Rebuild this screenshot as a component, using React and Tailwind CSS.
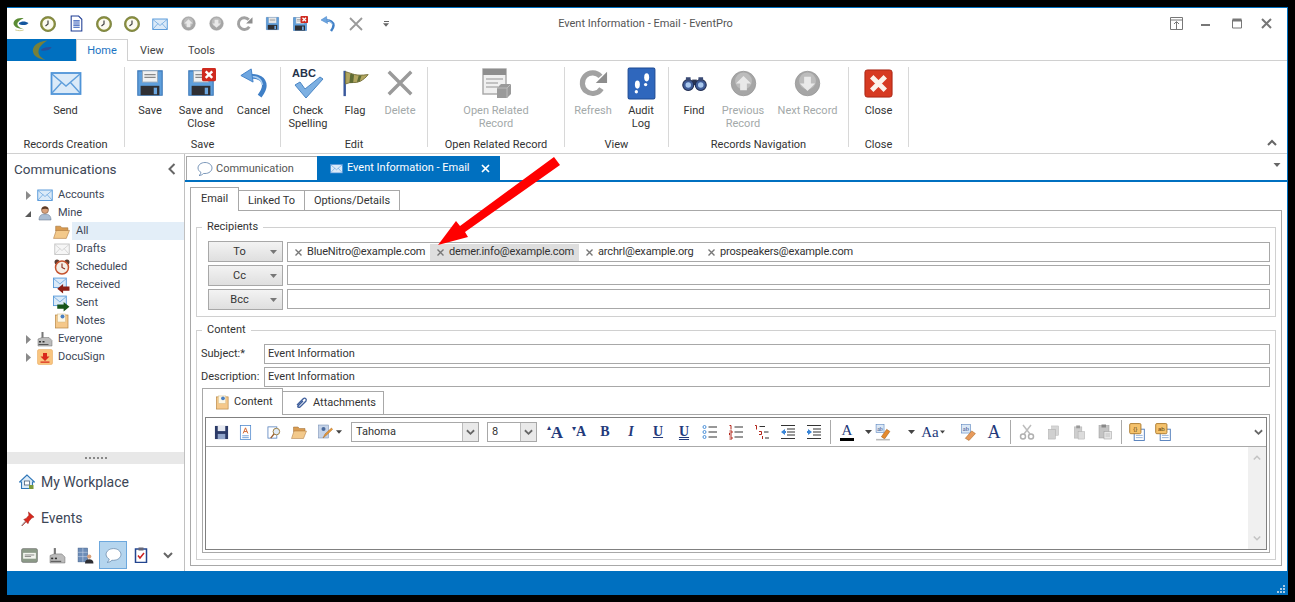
import React from "react";

const Svg = ({ s = 16, children, className = "" }) => (
  <svg width={s} height={s} viewBox="0 0 32 32" className={"shrink-0 " + className}>{children}</svg>
);

const Mail = ({ s, grey }) => (
  <Svg s={s}>
    <rect x="1.5" y="6" width="29" height="21" fill={grey ? "#f6f6f6" : "#dbeaf8"} stroke={grey ? "#c4c4c4" : "#4f94d8"} strokeWidth="1.8" />
    <path d="M2 7l14 12L30 7M2 26l10-11M30 26L20 15" fill="none" stroke={grey ? "#c8c8c8" : "#5f9edb"} strokeWidth="1.4" />
  </Svg>
);
const Clock = ({ s }) => (
  <Svg s={s}>
    <circle cx="16" cy="16" r="13.5" fill="#fbfaf0" stroke="#8b8f3c" strokeWidth="4.5" />
    <circle cx="16" cy="16" r="15" fill="none" stroke="#6f7a52" strokeWidth="1" />
    <path d="M16 9v7l-5 4" fill="none" stroke="#444" strokeWidth="2.4" />
  </Svg>
);
const Doc = ({ s }) => (
  <Svg s={s}>
    <path d="M6 2h14l6 6v22H6z" fill="#fff" stroke="#1f3d94" strokeWidth="2" />
    <path d="M10 11h12M10 15h12M10 19h12M10 23h12" stroke="#2c55b5" strokeWidth="2" />
  </Svg>
);
const Round = ({ s, down }) => (
  <Svg s={s}>
    <circle cx="16" cy="16" r="14.5" fill="#a6a6a6" stroke="#999" />
    <circle cx="16" cy="13" r="10" fill="#bcbcbc" />
    <path d={down ? "M12 8h8v8h5l-9 9-9-9h5z" : "M12 24h8v-8h5l-9-9-9 9h5z"} fill="#e9e9e9" />
  </Svg>
);
const Refresh = ({ s }) => (
  <Svg s={s}>
    <path d="M25 22a11 11 0 1 1-1-13" fill="none" stroke="#a2a2a2" strokeWidth="5.5" />
    <path d="M31 4v12H19z" fill="#8d8d8d" />
  </Svg>
);
const Floppy = ({ s, x }) => (
  <Svg s={s}>
    <path d="M3 3h26v26H3z" fill="#5f9fdc" stroke="#3c78b8" strokeWidth="1.2" />
    <rect x="8" y="3" width="16" height="12" fill="#f1f1f1" stroke="#9ab" />
    <path d="M10 7h12M10 10h12" stroke="#888" strokeWidth="1.2" />
    <rect x="6" y="19" width="20" height="10" fill="#2f2f33" />
    <rect x="20" y="21" width="3.5" height="7" fill="#6ba6df" />
    {x && <>
      <rect x="17" y="0" width="15" height="14" rx="1.5" fill="#cf2a1f" />
      <path d="M21 3.5l7 7M28 3.5l-7 7" stroke="#fff" strokeWidth="2.6" />
    </>}
  </Svg>
);
const Undo = ({ s }) => (
  <Svg s={s}>
    <path d="M12 9c8-1 15 3 15 10 0 4-2 7-5 11" fill="none" stroke="#3f7fc6" strokeWidth="5" />
    <path d="M13 9c6 0 11 3 12 9" fill="none" stroke="#a9cdf0" strokeWidth="1.6" />
    <path d="M2 8l11-7 2 14z" fill="#6ea6e0" stroke="#3f7fc6" />
  </Svg>
);
const GreyX = ({ s }) => (
  <Svg s={s}><path d="M4 4l24 24M28 4L4 28" stroke="#9a9a9a" strokeWidth="3.6" /></Svg>
);
const Spell = ({ s }) => (
  <Svg s={s}>
    <text x="0" y="10" fontSize="11" fontWeight="700" fontFamily="Liberation Sans" fill="#24324a">ABC</text>
    <path d="M3 18l5-3 5 7L28 10l3 2-17 19z" fill="#7db0e2" stroke="#4b86c4" strokeWidth="1" />
  </Svg>
);
const Flag = ({ s }) => (
  <Svg s={s}>
    <path d="M5 3v27" stroke="#39589c" strokeWidth="2.6" />
    <path d="M6 4c8 2 10 5 24 3-3 4-5 5-8 7-6 3-10 0-16 3z" fill="#b2a660" stroke="#75703a" />
    <path d="M11 6l4 1-1 9-4 0zM20 8l3 0-2 6-3 1z" fill="#5e6b35" />
  </Svg>
);
const OpenRel = ({ s }) => (
  <Svg s={s}>
    <rect x="3" y="2" width="23" height="25" fill="#f0f0f0" stroke="#a5a5a5" strokeWidth="1.4" />
    <rect x="3" y="2" width="23" height="6" fill="#8e8e8e" />
    <path d="M6 12h17M6 16h12M6 20h12" stroke="#b3b3b3" strokeWidth="1.6" />
    <path d="M17 21l4-4h10v10l-4 4H17z" fill="#9a9a9a" />
    <path d="M17 21h10v10M27 21l4-4" fill="none" stroke="#bbb" />
  </Svg>
);
const Audit = ({ s }) => (
  <Svg s={s}>
    <rect x="3" y="1" width="26" height="30" rx="1.5" fill="#2f67bd" stroke="#1d4a94" />
    <ellipse cx="12" cy="17" rx="2.4" ry="4" fill="#fff" />
    <circle cx="11" cy="24" r="1.6" fill="#fff" />
    <ellipse cx="21" cy="10" rx="2.4" ry="4" fill="#fff" />
    <circle cx="20" cy="17" r="1.6" fill="#fff" />
  </Svg>
);
const Find = ({ s }) => (
  <Svg s={s}>
    <rect x="13" y="11" width="6" height="7" fill="#2b3452" />
    <circle cx="8" cy="18" r="7" fill="#3f5c98" stroke="#222e50" strokeWidth="1.4" />
    <circle cx="24" cy="18" r="7" fill="#3f5c98" stroke="#222e50" strokeWidth="1.4" />
    <circle cx="8" cy="18" r="3.5" fill="#a9c8ee" />
    <circle cx="24" cy="18" r="3.5" fill="#a9c8ee" />
    <rect x="5" y="8" width="6" height="5" fill="#3a4a74" />
    <rect x="21" y="8" width="6" height="5" fill="#3a4a74" />
  </Svg>
);
const RedClose = ({ s }) => (
  <Svg s={s}>
    <rect x="2" y="2" width="28" height="28" rx="2.5" fill="#d63a22" stroke="#a82413" />
    <path d="M9 9l14 14M23 9L9 23" stroke="#fbf3ec" strokeWidth="5" />
  </Svg>
);
const Logo = ({ s }) => (
  <Svg s={s}>
    <path d="M22 6C8 4 2 12 3 17c1 5 8 9 18 9-7-2-11-5-11-9s5-8 12-11z" fill="#5b8c35" />
    <path d="M13 15c4-4 13-4 18 0-4 5-13 5-18 2z" fill="#14569e" />
    <path d="M6 28c6 2 12 2 16 0" stroke="#c8c27a" strokeWidth="1.5" fill="none" />
  </Svg>
);
const TabLogo = () => (
  <Svg s={22}>
    <path d="M24 2C8 3 1 12 3 19c1 6 9 11 18 11-7-3-11-7-10-13 1-6 6-11 13-15z" fill="#77803a" />
    <path d="M15 15c5-3 11-4 15-3-2 4-9 6-15 5z" fill="#27509c" />
  </Svg>
);
const Person = ({ s }) => (
  <Svg s={s}>
    <path d="M4 30c0-8 4-12 12-12s12 4 12 12z" fill="#a9bcd2" stroke="#5e6f86" />
    <circle cx="16" cy="10" r="7" fill="#d9a27c" stroke="#6a4630" />
    <path d="M9 9c0-8 14-8 14 0-4-2-9-2-14 0z" fill="#5b3a25" />
  </Svg>
);
const Folder = ({ s }) => (
  <Svg s={s}>
    <path d="M5 6h9l3 3h11v6H5z" fill="#d99c52" stroke="#9a6a30" />
    <path d="M1 29l5-15h25l-6 15z" fill="#f3c98b" stroke="#a8743a" />
  </Svg>
);
const Alarm = ({ s }) => (
  <Svg s={s}>
    <circle cx="6" cy="6" r="5" fill="#5a3b30" />
    <circle cx="26" cy="6" r="5" fill="#5a3b30" />
    <circle cx="16" cy="17" r="13" fill="#f5efe6" stroke="#c5532e" strokeWidth="3" />
    <path d="M16 9v8l6 3" fill="none" stroke="#8a2a1a" strokeWidth="2.2" />
  </Svg>
);
const MailArrow = ({ s, out }) => (
  <Svg s={s}>
    <rect x="1" y="2" width="24" height="18" fill="#dbeaf8" stroke="#4f94d8" strokeWidth="1.6" />
    <path d="M1 3l12 10L25 3" fill="none" stroke="#5f9edb" strokeWidth="1.4" />
    {out
      ? <path d="M8 18h12v-5l11 9-11 9v-5H8z" fill="#17561a" />
      : <path d="M31 18H19v-5L8 22l11 9v-5h12z" fill="#8c1f14" />}
  </Svg>
);
const Note = ({ s }) => (
  <Svg s={s}>
    <rect x="3" y="4" width="25" height="26" fill="#f5c88a" stroke="#b58542" strokeWidth="1.4" />
    <rect x="7" y="2" width="16" height="16" fill="#fdf7e6" stroke="#d2b67c" />
    <circle cx="17" cy="7" r="4" fill="#4a7fc2" />
  </Svg>
);
const Factory = ({ s }) => (
  <Svg s={s}>
    <rect x="9" y="2" width="4" height="12" fill="#777" />
    <path d="M2 30V16l8-3h14l6 6v11z" fill="#bcbcbc" stroke="#6d6d6d" />
    <rect x="4" y="20" width="4" height="3" fill="#333" />
    <rect x="11" y="20" width="4" height="3" fill="#333" />
    <rect x="3" y="26" width="20" height="2" fill="#555" />
  </Svg>
);
const Docu = ({ s }) => (
  <Svg s={s}>
    <rect x="1" y="1" width="30" height="30" rx="3" fill="#f9c57f" stroke="#e6a457" />
    <path d="M12 8h8v7h5l-9 9-9-9h5z" fill="#d9291c" />
    <rect x="7" y="25" width="18" height="2.5" fill="#d9291c" />
  </Svg>
);
const House = ({ s }) => (
  <Svg s={s}>
    <path d="M16 2L1 16h4v13h22V16h4z" fill="#dcebf8" stroke="#2f76b8" strokeWidth="2.2" />
    <rect x="11" y="14" width="10" height="8" fill="#fff" stroke="#49607c" strokeWidth="1.6" />
    <rect x="20" y="22" width="9" height="8" fill="#7c9a3a" />
  </Svg>
);
const Pin = ({ s }) => (
  <Svg s={s}>
    <path d="M18 2l12 11-5 2-6 7-2 5-4-4-9 9 8-10-4-4 5-2 6-7z" fill="#d9281e" stroke="#8e1710" />
    <path d="M3 31l8-9" stroke="#999" strokeWidth="2" />
  </Svg>
);
const Card = ({ s }) => (
  <Svg s={s}>
    <rect x="1" y="3" width="30" height="26" rx="3" fill="#8c9a88" stroke="#666" />
    <rect x="4" y="11" width="24" height="11" fill="#f3f5ef" />
    <path d="M7 15h18M7 18h12" stroke="#666" strokeWidth="1.4" />
  </Svg>
);
const BuildingMan = ({ s }) => (
  <Svg s={s}>
    <rect x="2" y="2" width="18" height="26" fill="#6d8db8" stroke="#45628c" />
    <path d="M11 2v26M2 10h18M2 18h18" stroke="#cfdcec" />
    <circle cx="23" cy="18" r="4" fill="#d9a27c" />
    <path d="M15 31c0-6 3-8 8-8s8 2 8 8z" fill="#2d2d33" />
  </Svg>
);
const Bubble = ({ s, line = "#6f8fb0" }) => (
  <Svg s={s}>
    <path d="M16 3C8 3 2 8 2 14c0 4 3 7 6 9-1 3-2 5-4 6 4 0 7-2 9-4h3c8 0 14-5 14-11S24 3 16 3z" fill="#fff" stroke={line} strokeWidth="1.6" />
  </Svg>
);
const Clip = ({ s }) => (
  <Svg s={s}>
    <rect x="5" y="4" width="22" height="27" fill="#fff" stroke="#23458f" strokeWidth="3" />
    <rect x="11" y="1" width="10" height="6" fill="#667" />
    <path d="M10 17l4 5 8-10" fill="none" stroke="#cb2020" strokeWidth="3" />
  </Svg>
);
const Tri = ({ open }) => (
  <svg width="7" height="9" viewBox="0 0 7 9" className="shrink-0">
    {open ? <path d="M6 2v6H0z" fill="#595959" /> : <path d="M1 0l5 4.5L1 9z" fill="#8a8a8a" />}
  </svg>
);
const Chev = ({ up, w = 10, c = "#777" }) => (
  <svg width={w} height="7" viewBox="0 0 10 7" className="shrink-0">
    <path d={up ? "M1 6l4-4 4 4" : "M1 1l4 4 4-4"} fill="none" stroke={c} strokeWidth="2" />
  </svg>
);
const Drop = ({ c = "#444", w = 7 }) => (
  <svg width={w} height="4" viewBox="0 0 7 4" className="shrink-0"><path d="M0 0h7L3.5 4z" fill={c} /></svg>
);

const Qat = ({ w = "w-[28px]", children }) => (
  <div className={"flex items-center justify-center " + w}>{children}</div>
);

const RibbonItem = ({ w, icon, label, off }) => (
  <div className={"flex flex-col items-center " + w}>
    <div className="h-[36px] flex items-center justify-center">{icon}</div>
    <div className={"mt-[3px] text-center leading-[13px] whitespace-nowrap " + (off ? "text-[#a3a9a9]" : "text-[#333]")}>{label}</div>
  </div>
);

const Group = ({ w, caption, children }) => (
  <>
    <div className={"flex flex-col " + w}>
      <div className="flex h-[73px] justify-center">{children}</div>
      <div className="text-center leading-[13px] text-[#333] whitespace-nowrap">{caption}</div>
    </div>
    <div className="w-px h-[80px] mt-[2px] bg-[#d8d8d8]" />
  </>
);

const TreeRow = ({ tri, icon, label, sub, active }) => (
  <div className="flex items-center h-[18px]">
    {sub ? (
      <div className="w-[65px] flex justify-end pr-[2px]">{icon}</div>
    ) : (
      <div className="flex items-center w-[50px] pl-[18px] gap-[5px]"><Tri open={tri === "open"} />{icon}</div>
    )}
    <div className={"flex-1 h-full flex items-center text-[#3c4656] pt-px " + (sub ? "pl-[4px] " : "pl-[1px] ") + (active ? "bg-[#e3eef8]" : "")}>{label}</div>
  </div>
);

const PickBtn = ({ label }) => (
  <div className="w-[75px] h-[21px] shrink-0 flex items-center border border-[#a8a8a8] bg-linear-to-b from-[#f3f3f3] to-[#dfdfdf] text-[#333]">
    <span className="w-[61px] text-center pt-px">{label}</span>
    <Drop c="#777" />
  </div>
);

const Chip = ({ label, on, cls }) => (
  <div className={"flex items-center h-[17px] shrink-0 pl-[7px] gap-[5px] whitespace-nowrap text-[#333] tracking-[-0.15px] " + (on ? "bg-[#dedede] " : "") + cls}>
    <svg width="7" height="7" viewBox="0 0 7 7" className="shrink-0"><path d="M0.5 0.5l6 6M6.5 0.5l-6 6" stroke="#777" strokeWidth="1.4" /></svg>
    <span>{label}</span>
  </div>
);

const Tool = ({ w = "w-[26px]", m = "", children }) => (
  <div className={"flex items-center justify-center h-full shrink-0 " + w + " " + m}>{children}</div>
);
const Glyph = ({ cls, children }) => (
  <span className={"font-['Liberation_Serif',serif] leading-none text-[#23397a] " + cls}>{children}</span>
);
const Lines = ({ kind }) => (
  <Svg s={16}>
    {kind === "dot" && <>
      <circle cx="5" cy="6" r="3" fill="none" stroke="#4a90d9" strokeWidth="2" />
      <circle cx="5" cy="16" r="3" fill="none" stroke="#4a90d9" strokeWidth="2" />
      <circle cx="5" cy="26" r="3" fill="none" stroke="#4a90d9" strokeWidth="2" />
    </>}
    {kind === "num" && <path d="M3 3h3v8M3 14h5v4H3v4h5M3 26h5v4H3" fill="none" stroke="#b3261b" strokeWidth="2" />}
    {kind === "multi" && <>
      <path d="M2 3h3v8" fill="none" stroke="#b3261b" strokeWidth="2" />
      <path d="M10 15h5v6h-5M17 24v6" fill="none" stroke="#b3261b" strokeWidth="2" />
      <path d="M11 5h11M20 16h9M22 28h8" stroke="#333" strokeWidth="2.2" />
    </>}
    {kind !== "multi" && <path d="M13 6h17M13 16h17M13 26h17" stroke="#333" strokeWidth="2.2" />}
  </Svg>
);
const Indent = ({ out }) => (
  <Svg s={16}>
    <path d="M2 3h28M14 10h16M14 16h16M14 22h16M2 29h28" stroke="#333" strokeWidth="2.2" />
    <path d={out ? "M2 16l8-6v4h2v4h-2v4z" : "M12 16l-8-6v4H2v4h2v4z"} fill="#3a86d8" />
  </Svg>
);
const GreyDoc = ({ s, kind }) => (
  <Svg s={s}>
    {kind === "cut" && <>
      <path d="M8 2l14 18M24 2L10 20" stroke="#bdbdbd" strokeWidth="3" />
      <circle cx="8" cy="25" r="5" fill="none" stroke="#b0b0b0" strokeWidth="3" />
      <circle cx="24" cy="25" r="5" fill="none" stroke="#b0b0b0" strokeWidth="3" />
    </>}
    {kind === "copy" && <>
      <rect x="12" y="2" width="15" height="20" fill="#d6d6d6" stroke="#b5b5b5" />
      <rect x="5" y="9" width="15" height="21" fill="#d0d0d0" stroke="#a8a8a8" />
    </>}
    {kind === "paste" && <>
      <rect x="5" y="4" width="16" height="24" fill="#cecece" stroke="#aaa" />
      <rect x="9" y="1" width="8" height="6" fill="#999" />
      <rect x="13" y="14" width="14" height="16" fill="#dcdcdc" stroke="#aaa" />
    </>}
    {kind === "pasteb" && <>
      <rect x="4" y="3" width="20" height="25" fill="#c4c4c4" stroke="#999" />
      <rect x="9" y="1" width="9" height="6" fill="#888" />
      <rect x="14" y="15" width="15" height="15" fill="#e6e6e6" stroke="#999" />
      <path d="M17 20h9M17 24h9" stroke="#999" />
    </>}
  </Svg>
);
const MergeDoc = ({ t }) => (
  <Svg s={18}>
    <rect x="11" y="11" width="18" height="20" fill="#fff" stroke="#4a78b8" strokeWidth="1.6" />
    <path d="M14 22h12M14 26h12" stroke="#7aa0d0" strokeWidth="1.4" />
    <rect x="3" y="1" width="20" height="18" rx="2" fill="#f5c26c" stroke="#a9782c" strokeWidth="1.6" />
    <text x="13" y="14" textAnchor="middle" fontSize="11" fontFamily="Liberation Sans" fill="#5a3d10">{t}</text>
  </Svg>
);

const Sep = ({ m = "ml-[3px]" }) => <div className={"w-px h-[24px] bg-[#aaa] shrink-0 " + m} />;

const Combo = ({ w, text, tw }) => (
  <div className={"flex h-[20px] border border-[#a8a8a8] shrink-0 " + w}>
    <div className="flex-1 flex items-center pl-[4px] pt-px text-[#333]">{text}</div>
    <div className={"flex items-center justify-center bg-[#e9e9e9] border-l border-[#bbb] " + tw}><Chev w={9} c="#666" /></div>
  </div>
);

export default function App() {
  return (
    <div className="w-[1295px] h-[602px] bg-black pt-[7px] pl-[7px] overflow-hidden font-[Roboto,sans-serif] text-[11px]">
      <div className="relative w-[1281px] h-[588px] flex flex-col bg-white border-t border-r border-[#0070c0]">
        {/* title bar */}
        <div className="grid grid-cols-[1fr_auto_1fr] h-[31px] shrink-0">
          <div className="flex items-center">
            <Qat w="w-[27px]"><Logo s={17} /></Qat>
            <Qat><Clock s={16} /></Qat>
            <Qat><Doc s={17} /></Qat>
            <Qat><Clock s={16} /></Qat>
            <Qat><Clock s={16} /></Qat>
            <Qat><Mail s={16} /></Qat>
            <Qat><Round s={15} /></Qat>
            <Qat><Round s={15} down /></Qat>
            <Qat><Refresh s={17} /></Qat>
            <Qat><Floppy s={15} /></Qat>
            <Qat><Floppy s={16} x /></Qat>
            <Qat><Undo s={16} /></Qat>
            <Qat><GreyX s={16} /></Qat>
            <Qat w="w-[32px]">
              <div className="flex flex-col items-center gap-[1px]"><div className="w-[5px] h-px bg-[#666]" /><Drop c="#666" w={6} /></div>
            </Qat>
          </div>
          <div className="flex items-center text-[#555] pr-[3px] pt-[2px]">Event Information - Email - EventPro</div>
          <div className="flex items-center justify-end pr-[14px] gap-[17px]">
            <svg width="13" height="13" viewBox="0 0 13 13"><path d="M.5.5h12v12H.5zM.5 3h12M6.5 12V5M4 7l2.500-2.500L9 7" fill="none" stroke="#777" /></svg>
            <svg width="13" height="13" viewBox="0 0 13 13"><path d="M1 8h9" stroke="#777" strokeWidth="2" /></svg>
            <svg width="13" height="13" viewBox="0 0 13 13"><path d="M2.500 3h9v8h-9z" fill="none" stroke="#777" /><path d="M2.500 3h9" stroke="#777" strokeWidth="3" /></svg>
            <svg width="13" height="13" viewBox="0 0 13 13"><path d="M2 2l9 9M11 2l-9 9" stroke="#777" strokeWidth="2" /></svg>
          </div>
        </div>

        {/* ribbon tabs */}
        <div className="flex h-[22px] shrink-0 border-b border-[#d0d0d0] relative">
          <div className="w-[69px] h-[22px] bg-[#0070c0] flex items-center justify-center"><TabLogo /></div>
          <div className="w-[52px] h-[22px] pt-[2px] bg-white border-t border-x border-[#d0d0d0] text-[#1a73c2] flex items-center justify-center">Home</div>
          <div className="w-[48px] pt-[3px] flex items-center justify-center text-[#444]">View</div>
          <div className="w-[51px] pt-[3px] flex items-center justify-center text-[#444]">Tools</div>
        </div>

        {/* ribbon */}
        <div className="flex h-[93px] shrink-0 border-b border-[#d0d0d0] pt-[4px]">
          <Group w="w-[117px]" caption="Records Creation">
            <RibbonItem w="w-[60px]" icon={<Mail s={32} />} label="Send" />
          </Group>
          <Group w="w-[155px]" caption="Save">
            <RibbonItem w="w-[50px]" icon={<Floppy s={30} />} label="Save" />
            <RibbonItem w="w-[52px]" icon={<Floppy s={30} x />} label={<>Save and<br />Close</>} />
            <RibbonItem w="w-[53px]" icon={<Undo s={30} />} label="Cancel" />
          </Group>
          <Group w="w-[146px]" caption="Edit">
            <RibbonItem w="w-[54px]" icon={<Spell s={32} />} label={<>Check<br />Spelling</>} />
            <RibbonItem w="w-[40px]" icon={<Flag s={30} />} label="Flag" />
            <RibbonItem w="w-[50px] mr-[2px]" icon={<GreyX s={30} />} label="Delete" off />
          </Group>
          <Group w="w-[136px]" caption="Open Related Record">
            <RibbonItem w="w-[120px]" icon={<OpenRel s={32} />} label={<>Open Related<br />Record</>} off />
          </Group>
          <Group w="w-[103px]" caption="View">
            <RibbonItem w="w-[56px]" icon={<Refresh s={30} />} label="Refresh" off />
            <RibbonItem w="w-[40px] mr-[7px]" icon={<Audit s={33} />} label={<>Audit<br />Log</>} />
          </Group>
          <Group w="w-[179px]" caption="Records Navigation">
            <RibbonItem w="w-[50px]" icon={<Find s={25} />} label="Find" />
            <RibbonItem w="w-[48px]" icon={<Round s={27} />} label={<>Previous<br />Record</>} off />
            <RibbonItem w="w-[81px]" icon={<Round s={27} down />} label="Next Record" off />
          </Group>
          <Group w="w-[59px]" caption="Close">
            <RibbonItem w="w-[59px]" icon={<RedClose s={31} />} label="Close" />
          </Group>
          <div className="flex-1 flex justify-end items-end pr-[10px] pb-[7px]"><Chev up c="#666" /></div>
        </div>

        {/* body */}
        <div className="flex flex-1 min-h-0">
          {/* sidebar */}
          <div className="w-[178px] shrink-0 border-r border-[#c0c0c0] flex flex-col">
            <div className="flex items-center justify-between h-[30px] pl-[7px] pr-[8px] text-[13.5px] text-[#3c4656]">
              <span>Communications</span>
              <svg width="8" height="12" viewBox="0 0 8 12"><path d="M6.500 1L1.500 6l5 5" fill="none" stroke="#666" strokeWidth="2" /></svg>
            </div>
            <div className="mt-[2px]">
              <TreeRow tri="closed" icon={<Mail s={16} />} label="Accounts" />
              <TreeRow tri="open" icon={<Person s={16} />} label="Mine" />
              <TreeRow sub icon={<Folder s={17} />} label="All" active />
              <TreeRow sub icon={<Mail s={16} grey />} label="Drafts" />
              <TreeRow sub icon={<Alarm s={16} />} label="Scheduled" />
              <TreeRow sub icon={<MailArrow s={17} />} label="Received" />
              <TreeRow sub icon={<MailArrow s={17} out />} label="Sent" />
              <TreeRow sub icon={<Note s={16} />} label="Notes" />
              <TreeRow tri="closed" icon={<Factory s={16} />} label="Everyone" />
              <TreeRow tri="closed" icon={<Docu s={16} />} label="DocuSign" />
            </div>
            <div className="flex-1" />
            <div className="h-[12px] bg-[#e8e8e8] flex items-center justify-center gap-[2px]">
              {[0, 1, 2, 3, 4, 5].map((i) => <div key={i} className="w-[2px] h-[2px] bg-[#888]" />)}
            </div>
            <div className="h-[36px] flex items-center pl-[12px] gap-[6px] text-[14px] text-[#3c4656]"><House s={16} />My Workplace</div>
            <div className="h-[36px] flex items-center pl-[13px] gap-[6px] text-[14px] text-[#3c4656]"><Pin s={15} />Events</div>
            <div className="h-[35px] flex items-end pb-[2px] pl-[8px]">
              <div className="w-[28px] h-[28px] flex items-center justify-center"><Card s={17} /></div>
              <div className="w-[28px] h-[28px] flex items-center justify-center"><Factory s={17} /></div>
              <div className="w-[28px] h-[28px] flex items-center justify-center"><BuildingMan s={17} /></div>
              <div className="w-[28px] h-[28px] flex items-center justify-center bg-[#b5d5ee] border border-[#6da8dd]"><Bubble s={17} /></div>
              <div className="w-[28px] h-[28px] flex items-center justify-center"><Clip s={16} /></div>
              <div className="w-[26px] h-[28px] flex items-center justify-center"><Chev c="#666" /></div>
            </div>
          </div>

          {/* main */}
          <div className="flex-1 min-w-0 flex flex-col pt-[2px]">
            <div className="flex h-[26px] shrink-0 border-b-2 border-[#0070c0] pl-px relative">
              <div className="w-[131px] h-[24px] flex items-center pl-[10px] gap-[3px] border-t border-l border-[#a8a8a8] text-[#555]">
                <Bubble s={16} line="#5a7ea8" /><span className="pt-px">Communication</span>
              </div>
              <div className="w-[183px] h-[24px] flex items-center pl-[13px] bg-[#0070c0] text-white whitespace-nowrap">
                <Mail s={13} />
                <span className="ml-[4px] pt-px">Event Information - Email</span>
                <svg width="9" height="9" viewBox="0 0 9 9" className="ml-[12px] shrink-0"><path d="M1 1l7 7M8 1L1 8" stroke="#fff" strokeWidth="1.700" /></svg>
              </div>
              <div className="flex-1 flex justify-end items-center pr-[6px] pb-[6px]"><Drop c="#666" w={8} /></div>
            </div>

            <div className="flex-1 min-h-0 flex flex-col pt-[5px] pl-[5px] pr-[5px] pb-[5px]">
              <div className="flex items-end h-[23px] shrink-0">
                <div className="w-[49px] h-[24px] mb-[-1px] relative flex items-center justify-center border-t border-x border-[#a8a8a8] bg-white text-[#333]">Email</div>
                <div className="w-[66px] h-[20px] pt-px flex items-center justify-center border-t border-r border-[#a8a8a8] text-[#333]">Linked To</div>
                <div className="w-[95px] h-[20px] pt-px flex items-center justify-center border-t border-r border-[#a8a8a8] text-[#333]">Options/Details</div>
              </div>
              <div className="flex-1 min-h-0 border border-[#a8a8a8] pl-[5px] pr-[5px] pt-[16px]">
                {/* recipients */}
                <div className="relative h-[90px] border border-[#d0d0d0] pl-[11px] pr-[5px] pt-[13px] flex flex-col gap-[3px]">
                  <span className="absolute left-[5px] top-[-8px] bg-white px-[5px] leading-[14px] text-[#333]">Recipients</span>
                  <div className="flex gap-[4px]">
                    <PickBtn label="To" />
                    <div className="flex-1 h-[20px] mt-px border border-[#a8a8a8] flex items-center">
                      <Chip label="BlueNitro@example.com" cls="w-[142px]" />
                      <Chip on label="demer.info@example.com" cls="w-[149px]" />
                      <Chip label="archrl@example.org" cls="w-[122px]" />
                      <Chip label="prospeakers@example.com" />
                    </div>
                  </div>
                  <div className="flex gap-[4px]">
                    <PickBtn label="Cc" />
                    <div className="flex-1 h-[20px] border border-[#a8a8a8]" />
                  </div>
                  <div className="flex gap-[4px]">
                    <PickBtn label="Bcc" />
                    <div className="flex-1 h-[20px] border border-[#a8a8a8]" />
                  </div>
                </div>

                {/* content */}
                <div className="relative mt-[13px] h-[230px] border border-[#d0d0d0] pl-[4px] pr-[5px] pt-[13px]">
                  <span className="absolute left-[5px] top-[-8px] bg-white px-[5px] leading-[14px] text-[#333]">Content</span>
                  <div className="flex items-center h-[20px] mb-[3px]">
                    <span className="w-[63px] text-[#333] pt-px">Subject:*</span>
                    <div className="flex-1 h-full border border-[#a8a8a8] flex items-center pl-[3px] pt-px text-[#333]">Event Information</div>
                  </div>
                  <div className="flex items-center h-[20px]">
                    <span className="w-[63px] text-[#333]">Description:</span>
                    <div className="flex-1 h-full border border-[#a8a8a8] flex items-center pl-[3px] text-[#333]">Event Information</div>
                  </div>
                  <div className="flex items-end h-[27px] pl-px">
                    <div className="w-[81px] h-[27px] mb-[-1px] relative bg-white flex items-center pl-[12px] gap-[4px] border-t border-x border-[#a8a8a8] text-[#333]"><Note s={15} />Content</div>
                    <div className="w-[101px] h-[23px] flex items-center pl-[11px] gap-[4px] border-t border-r border-[#a8a8a8] text-[#333]">
                      <svg width="15" height="15" viewBox="0 0 15 15"><path d="M3 9l6-6c2-2 4 0 3 2l-6 6c-1 1-3 0-2-1l5-5" fill="none" stroke="#3f5f9c" strokeWidth="1.300" /></svg>
                      Attachments
                    </div>
                  </div>
                  <div className="ml-px h-[139px] border border-[#a8a8a8] p-[2px]">
                    <div className="h-full flex flex-col border border-[#808080]">
                      <div className="h-[29px] shrink-0 border-b border-[#aaa] flex items-center pl-[3px]">
                        <Tool w="w-[24px]"><Svg s={15}><rect x="2" y="2" width="28" height="28" fill="#2b3a67" /><rect x="8" y="2" width="16" height="11" fill="#e6e9f0" /><rect x="8" y="19" width="16" height="11" fill="#8fa3c8" /></Svg></Tool>
                        <Tool w="w-[24px]"><Svg s={15}><rect x="5" y="1" width="22" height="30" fill="#fff" stroke="#4a85cc" strokeWidth="1.600" /><path d="M11 18l5-12 5 12M13 14h6" fill="none" stroke="#d0622a" strokeWidth="2" /><path d="M9 23h14M9 27h14" stroke="#4a85cc" strokeWidth="1.600" /></Svg></Tool>
                        <Tool m="ml-[4px]"><Svg s={15}><rect x="2" y="4" width="19" height="24" fill="#fff" stroke="#4a78b8" strokeWidth="1.600" /><circle cx="20" cy="14" r="7" fill="#dfeaf6" stroke="#9a7a3a" strokeWidth="2" /><path d="M15 19L8 28" stroke="#9a5a2a" strokeWidth="3" /></Svg></Tool>
                        <Tool w="w-[24px]"><Folder s={16} /></Tool>
                        <Tool w="w-[22px]" m="ml-[3px]"><Svg s={16}><rect x="3" y="2" width="20" height="26" fill="#c5d3e8" stroke="#6a84ad" /><circle cx="13" cy="10" r="4" fill="#4a6a9c" /><path d="M12 28l4-8 13-12 2 3-13 12z" fill="#e79a3c" stroke="#a8651a" /></Svg></Tool>
                        <Tool w="w-[6px]"><Drop w={6} /></Tool>
                        <div className="ml-[9px]"><Combo w="w-[128px]" text="Tahoma" tw="w-[16px]" /></div>
                        <div className="ml-[8px]"><Combo w="w-[50px]" text="8" tw="w-[16px]" /></div>
                        <Tool m="ml-[5px]"><Glyph cls="text-[17px] font-bold text-[#2a5aa8]">A</Glyph><span className="text-[8px] leading-none self-center mb-[8px] order-first text-[#23397a]">▴</span></Tool>
                        <Tool w="w-[22px]"><span className="text-[8px] leading-none mb-[6px] text-[#23397a]">▾</span><Glyph cls="text-[14px] font-bold text-[#2a5aa8]">A</Glyph></Tool>
                        <Tool m="ml-[2px]"><Glyph cls="text-[14px] font-bold">B</Glyph></Tool>
                        <Tool><Glyph cls="text-[14px] font-bold italic">I</Glyph></Tool>
                        <Tool m="ml-[1px]"><Glyph cls="text-[14px] font-bold underline">U</Glyph></Tool>
                        <Tool><Glyph cls="text-[14px] font-bold underline decoration-double">U</Glyph></Tool>
                        <Tool><Lines kind="dot" /></Tool>
                        <Tool><Lines kind="num" /></Tool>
                        <Tool><Lines kind="multi" /></Tool>
                        <Tool><Indent out /></Tool>
                        <Tool><Indent /></Tool>
                        <Sep />
                        <Tool m="ml-[3px]">
                          <div className="flex flex-col items-center">
                            <Glyph cls="text-[15px]">A</Glyph>
                            <div className="w-[14px] h-[3px] bg-black" />
                          </div>
                        </Tool>
                        <Tool w="w-[12px]" m="ml-[2px]"><Drop /></Tool>
                        <Tool w="w-[18px]"><Svg s={17}><rect x="2" y="1" width="15" height="15" fill="#dbe8f6" stroke="#4a78b8" /><text x="9.500" y="13" textAnchor="middle" fontSize="11" fill="#23397a" fontFamily="Liberation Serif">ab</text><path d="M12 24l10-14 6 4-10 14z" fill="#e58a2e" stroke="#9a5a1a" /><rect x="2" y="28" width="26" height="3" fill="#bbb" /></Svg></Tool>
                        <Tool w="w-[12px]" m="ml-[13px]"><Drop /></Tool>
                        <Tool m="ml-[3px]"><Glyph cls="text-[15px] text-[#2a6ab0]">Aa</Glyph><span className="ml-[1px]"><Drop w={5} /></span></Tool>
                        <Tool m="ml-[9px]"><Svg s={17}><rect x="3" y="1" width="17" height="16" fill="#dbe8f6" stroke="#4a78b8" /><text x="11" y="13" textAnchor="middle" fontSize="12" fill="#23397a" fontFamily="Liberation Serif">ab</text><path d="M10 27l12-14 7 5-12 13z" fill="#e79a5c" stroke="#a8651a" /></Svg></Tool>
                        <Tool><Glyph cls="text-[18px] text-[#2a4a8e]">A</Glyph></Tool>
                        <Sep />
                        <Tool m="ml-[3px]"><GreyDoc s={16} kind="cut" /></Tool>
                        <Tool><GreyDoc s={15} kind="copy" /></Tool>
                        <Tool><GreyDoc s={15} kind="paste" /></Tool>
                        <Tool><GreyDoc s={16} kind="pasteb" /></Tool>
                        <Sep />
                        <Tool m="ml-[2px]"><MergeDoc t="{}" /></Tool>
                        <Tool><MergeDoc t="ab" /></Tool>
                        <div className="ml-auto pr-[3px]"><Chev w={9} c="#666" /></div>
                      </div>
                      <div className="flex-1 flex justify-end">
                        <div className="w-[18px] bg-[#f0f0f0] flex flex-col items-center justify-between py-[7px]">
                          <Chev up w={8} c="#c4c4c4" />
                          <Chev w={8} c="#c4c4c4" />
                        </div>
                      </div>
                    </div>
                  </div>
                </div>
              </div>
            </div>
          </div>
        </div>

        {/* status bar */}
        <div className="h-[24px] shrink-0 bg-[#0070c0] flex items-end justify-end pr-[2px] pb-[2px]">
          <svg width="8" height="8" viewBox="0 0 8 8"><path d="M6 0h2v2H6zM3 3h2v2H3zM6 3h2v2H6zM0 6h2v2H0zM3 6h2v2H3zM6 6h2v2H6z" fill="#a9cbe6" /></svg>
        </div>

        {/* annotation arrow */}
        <svg width="140" height="100" viewBox="430 152 140 100" className="absolute left-[423px] top-[144px] pointer-events-none">
          <polygon points="438,245 456,221 460,226 554,157 560,165 465,232 468,237" fill="#f00" />
        </svg>
      </div>
    </div>
  );
}
